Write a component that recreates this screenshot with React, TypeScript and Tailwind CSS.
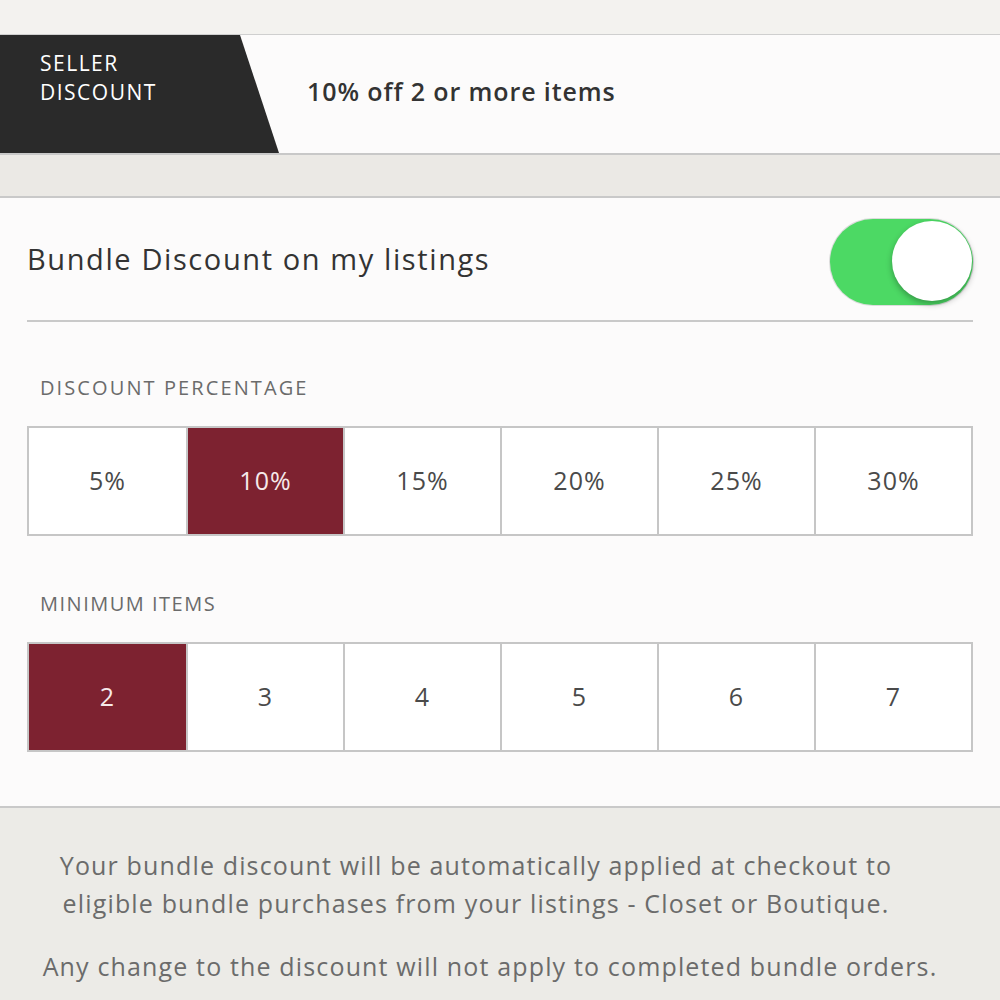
import React from "react";

const font = { fontFamily: "'Open Sans', 'Noto Sans', sans-serif" };

function Options({ items, selected }: { items: string[]; selected: number }) {
  return (
    <div className="grid grid-cols-6 h-[110px] border-2 border-[#c6c6c6] bg-white">
      {items.map((it, i) => (
        <div
          key={it}
          className={
            "flex items-center justify-center text-[25px] tracking-[1px] " +
            (i > 0 ? "border-l-2 border-[#c6c6c6] " : "") +
            (i === selected ? "bg-[#7d2230] text-[#f6e9ea]" : "text-[#4a4a4a]")
          }
        >
          {it}
        </div>
      ))}
    </div>
  );
}

export default function App() {
  return (
    <div className="w-[1000px] h-[1000px] overflow-hidden bg-[#ecebe7]" style={font}>
      <div className="h-[35px] bg-[#f3f2ef] border-b border-[#cfcfcf]" />
      <div className="h-[120px] bg-[#fcfbfb] border-b-2 border-[#c8c8c8] flex">
        <div className="w-[279px] h-full bg-[#2a2a2a] [clip-path:polygon(0_0,240px_0,100%_100%,0_100%)] pl-[40px] pt-[14px] text-white text-[21px] leading-[29px] tracking-[1.5px]">
          <div>SELLER</div>
          <div>DISCOUNT</div>
        </div>
        <div className="pl-[28px] pt-[40px] text-[25px] leading-[32px] font-semibold text-[#333] tracking-[0.9px]">
          10% off 2 or more items
        </div>
      </div>
      <div className="h-[43px] bg-[#ebe9e5] border-b-2 border-[#c9c9c9]" />
      <div className="bg-[#fcfbfb] border-b-2 border-[#c9c9c9] px-[27px] pb-[54px]">
        <div className="h-[124px] flex items-center justify-between border-b-2 border-[#c9c9c9]">
          <div className="text-[29px] text-[#333] tracking-[1.6px]">Bundle Discount on my listings</div>
          <div className="relative mt-[6px] w-[143px] h-[86px] rounded-full bg-[#4cd964] shadow-[0_0_0_1px_#dcdcdc]">
            <div className="absolute right-[1px] top-[2px] w-[80px] h-[80px] rounded-full bg-white shadow-[0_3px_6px_rgba(0,0,0,0.3)]" />
          </div>
        </div>
        <div className="pt-[51px] pl-[13px] text-[20px] leading-[30px] text-[#6b6b6b] tracking-[2.1px]">DISCOUNT PERCENTAGE</div>
        <div className="mt-[23px]">
          <Options items={["5%", "10%", "15%", "20%", "25%", "30%"]} selected={1} />
        </div>
        <div className="pt-[53px] pl-[13px] text-[20px] leading-[30px] text-[#6b6b6b] tracking-[1.5px]">MINIMUM ITEMS</div>
        <div className="mt-[23px]">
          <Options items={["2", "3", "4", "5", "6", "7"]} selected={0} />
        </div>
      </div>
      <div className="pt-[38px] text-center text-[25px] text-[#6b6b6b] leading-[38px] tracking-[1.15px]">
        <p className="pr-[48px]">
          Your bundle discount will be automatically applied at checkout to
          <br />
          eligible bundle purchases from your listings - Closet or Boutique.
        </p>
        <p className="mt-[25px] pr-[20px]">Any change to the discount will not apply to completed bundle orders.</p>
      </div>
    </div>
  );
}
